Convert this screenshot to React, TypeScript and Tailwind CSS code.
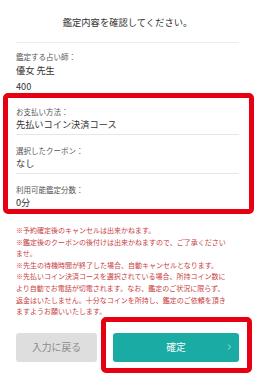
import React from 'react';
import { ChevronRight } from 'lucide-react';

interface Row {
  label: string;
  values: string[];
}

const rows: Row[] = [
  { label: 'お支払い方法：', values: ['先払いコイン決済コース'] },
  { label: '選択したクーポン：', values: ['なし'] },
  { label: '利用可能鑑定分数：', values: ['0分'] },
];

const notes = [
  '※予約確定後のキャンセルは出来かねます。',
  '※鑑定後のクーポンの後付けは出来かねますので、ご了承くださいませ。',
  '※先生の待機時間が終了した場合、自動キャンセルとなります。',
  '※先払いコイン決済コースを選択されている場合、所持コイン数により自動でお電話が切電されます。なお、鑑定のご状況に限らず、返金はいたしません。十分なコインを所持し、鑑定のご依頼を頂きますようお願いいたします。',
];

const font = { fontFamily: '"Noto Sans CJK JP", "Noto Sans", sans-serif' };

const App: React.FC = () => {
  return (
    <div className="relative w-[255px] h-[375px] overflow-hidden bg-white" style={font}>
      <div className="mx-4">
        {/* Header */}
        <div className="pt-4 pb-[14px] border-b border-[#ececec] text-center text-[9.3px] leading-[12px] text-[#333]">
          鑑定内容を確認してください。
        </div>

        {/* Reader info */}
        <div className="pt-2 pb-[1px] border-b border-[#e6e6e6]">
          <p className="text-[7.5px] leading-[11px] text-[#555]">鑑定する占い師：</p>
          <p className="text-[9.2px] leading-[16px] text-[#333]">優女 先生</p>
          <p className="text-[9.2px] leading-[16px] text-[#333]">400</p>
        </div>

        {rows.map((row) => (
          <div key={row.label} className="pt-[10px] pb-[3px] border-b border-[#e6e6e6]">
            <p className="text-[7.5px] leading-[11px] text-[#555]">{row.label}</p>
            {row.values.map((v) => (
              <p key={v} className="text-[9.2px] leading-[14px] text-[#333]">
                {v}
              </p>
            ))}
          </div>
        ))}

        {/* Notes */}
        <div className="mt-3 w-[212px] text-[7px] leading-[11.6px] text-[#c8413f]">
          {notes.map((n) => (
            <p key={n}>{n}</p>
          ))}
        </div>

        {/* Buttons */}
        <div className="mt-[15px] flex gap-4">
          <button className="w-[81px] h-[29px] rounded-[3px] bg-[#dedede] text-[9.8px] text-[#8a8a8a]">
            入力に戻る
          </button>
          <button className="relative flex-1 h-[29px] rounded-[3px] bg-[#1aaba5] text-[9.8px] text-white flex items-center justify-center">
            確定
            <ChevronRight size={9} strokeWidth={1.6} className="absolute right-[5px] top-1/2 -translate-y-1/2" />
          </button>
        </div>
      </div>

      {/* Highlight annotations */}
      <div className="pointer-events-none absolute left-[3px] top-[93px] w-[251px] h-[121px] rounded-[5px] border-[5px] border-[#e60012]" />
      <div className="pointer-events-none absolute left-[101px] top-[317px] w-[151px] h-[56px] rounded-[5px] border-[5px] border-[#e60012]" />
    </div>
  );
};

export default App;
